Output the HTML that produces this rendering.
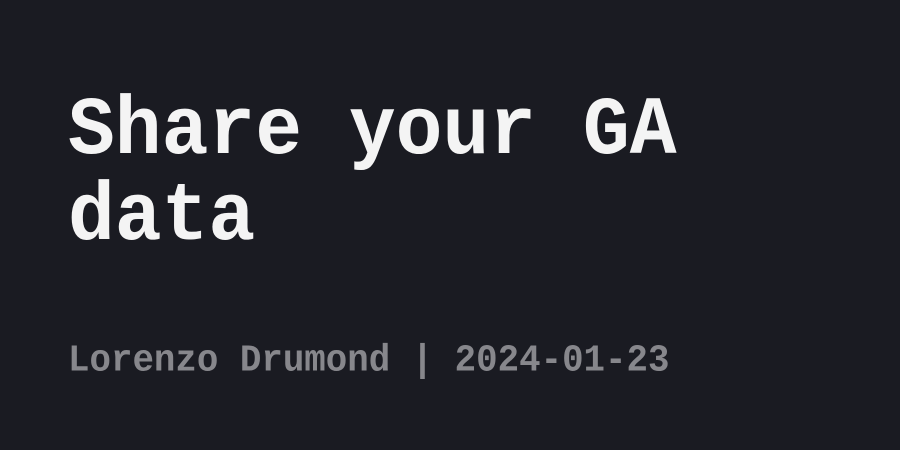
<!DOCTYPE html>
<html><head><meta charset="utf-8"><style>
html,body{margin:0;padding:0;width:900px;height:450px;background:#1a1b22;overflow:hidden}
.t{position:absolute;left:68px;font-family:"Liberation Mono",monospace;font-weight:bold;white-space:pre;line-height:1;transform-origin:0 100%}
.h{font-size:78px;color:#f4f4f4;transform:scaleY(1.06)}
.a{font-size:35.8px;color:#87878c;transform:scaleY(1.06)}
</style></head><body>
<div class="t h" style="top:95px">Share your GA</div>
<div class="t h" style="top:181px">data</div>
<div class="t a" style="top:344px">Lorenzo Drumond | 2024-01-23</div>
</body></html>
